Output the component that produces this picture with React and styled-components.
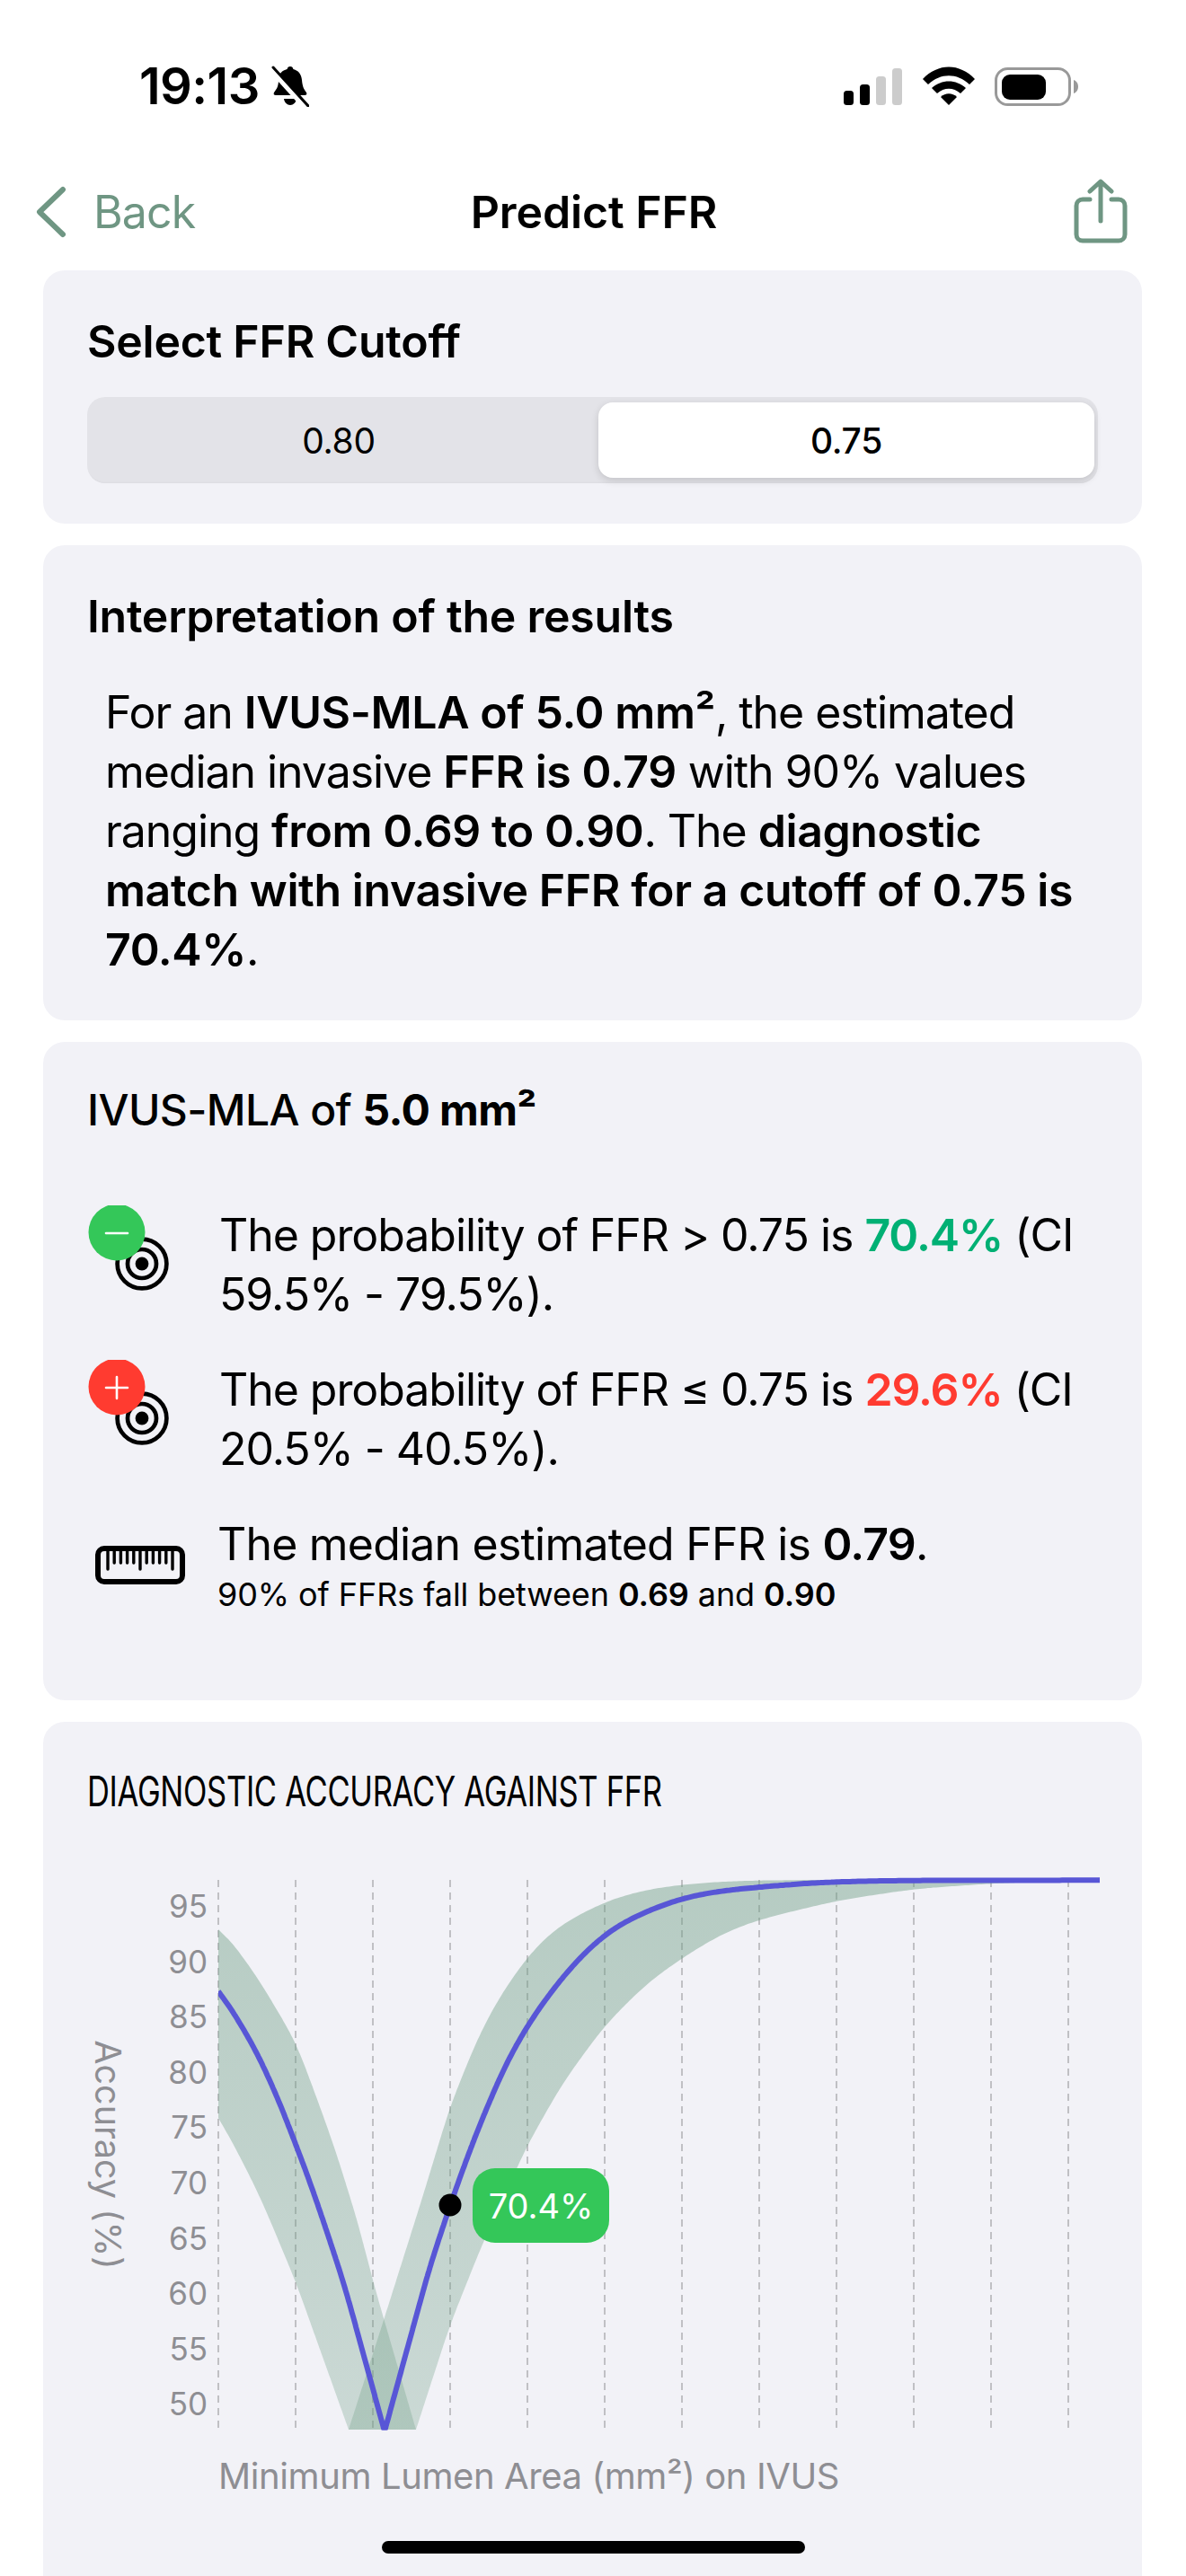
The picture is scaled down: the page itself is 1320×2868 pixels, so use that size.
import React from 'react';
import styled, { createGlobalStyle } from 'styled-components';

const Global = createGlobalStyle`
  html, body { margin: 0; padding: 0; background: #fff; }
  * { box-sizing: border-box; }
`;
const FONT = `Inter, "Noto Sans", "Liberation Sans", sans-serif`;
const ACCENT = '#6F9683';

const Page = styled.div`
  position: relative; width: 1320px; height: 2868px; overflow: hidden;
  background: #fff; font-family: ${FONT}; color: #000;
`;
const StatusBar = styled.div`
  height: 180px; display: flex; justify-content: space-between; align-items: flex-start;
  padding: 66px 120px 0 155px;
`;
const StatusLeft = styled.div`display: flex; align-items: center; gap: 13px; height: 60px;`;
const Time = styled.span`font-size: 56px; font-weight: 600; letter-spacing: -0.6px; line-height: 60px;`;
const StatusIcons = styled.svg`display: block; margin-top: 6px;`;
const Nav = styled.div`
  display: grid; grid-template-columns: 1fr auto 1fr; align-items: center; height: 121px;
  padding: 0 36px 10px 38px;
`;
const BackButton = styled.div`display: flex; align-items: center; gap: 30px; color: ${ACCENT};`;
const BackLabel = styled.span`font-size: 50px; letter-spacing: -0.9px; line-height: 60px;`;
const NavTitle = styled.div`font-size: 50px; font-weight: 600; letter-spacing: -0.1px; line-height: 60px;`;
const ShareBox = styled.div`justify-self: end; margin-right: 29px;`;
const Cards = styled.div`display: flex; flex-direction: column; gap: 24px; padding: 0 49px 0 48px;`;
const Card = styled.section`
  background: #F2F2F7; border-radius: 24px;
  padding: ${p => p.$pad || '54px 49px 45px'};
`;
const CardTitle = styled.h2`
  margin: 0; font-size: 50px; font-weight: 600; letter-spacing: -0.25px; line-height: 50px;
`;
const Segments = styled.div`
  position: relative; display: grid; grid-template-columns: 560px 1fr; column-gap: 9px; height: 96px; margin-top: 37px;
  background: #E3E3E8; border-radius: 20px; width: 1125px; padding: 6px 4px 6px 0;
  box-shadow: inset 0 -3px 2px -2px rgba(0,0,0,.03);
`;
const Segment = styled.div`
  display: flex; align-items: center; justify-content: center; font-size: 39px; letter-spacing: -0.3px;
  border-radius: 16px; background: ${p => p.$on ? '#fff' : 'transparent'};
  font-weight: ${p => p.$on ? 500 : 400};
  box-shadow: ${p => p.$on ? '0 3px 8px rgba(0,0,0,.14)' : 'none'};
`;
const Body = styled.p`
  margin: 49px 0 0 20px; font-size: 50px; line-height: 66px; letter-spacing: -1.05px; width: 1090px;
  b { font-weight: 600; letter-spacing: -0.4px; }
`;
const Sub = styled.h2`
  margin: 0; font-size: 48px; font-weight: 500; letter-spacing: -0.6px; line-height: 50px;
  b { font-weight: 700; }
`;
const Rows = styled.div`display: flex; flex-direction: column; gap: 40px; margin-top: 81px;`;
const Row = styled.div`display: grid; grid-template-columns: ${p => p.$col || 147}px 1fr;`;
const RowText = styled.div`
  font-size: 50px; line-height: 66px; letter-spacing: ${p => p.$ls || -1.05}px; b { font-weight: 600; }
`;
const Small = styled.div`
  font-size: 36px; line-height: 44px; margin-top: 1px; letter-spacing: -0.1px; b { font-weight: 600; }
`;
const Pct = styled.b`color: ${p => p.$c};`;
const ChartTitle = styled.h2`
  margin: 0; font-size: 46px; font-weight: 400; line-height: 50px; white-space: nowrap;
  transform: scaleX(.75); transform-origin: left center; letter-spacing: -0.4px;
`;
const Chart = styled.div`position: relative; width: 1223px; height: 780px; margin: 21px 0 0 -49px;`;
const ChartSvg = styled.svg`display: block;`;
const Badge = styled.div`
  position: absolute; left: 478px; top: 374px; width: 152px; height: 83px;
  background: #34C759; border-radius: 25px; color: #fff; font-size: 38px;
  display: flex; align-items: center; justify-content: center;
`;
const Home = styled.div`
  position: absolute; left: 425px; top: 2829px; width: 471px; height: 14px; border-radius: 7px; background: #000;
`;

// Resample a traced polyline evenly, then even out tracing noise with a symmetric window
// that narrows at the ends, so the end points stay where they were traced.
function fair(pts, step = 3, radius = 14) {
  const dense = [];
  for (let i = 0; i < pts.length - 1; i++) {
    const [x0, y0] = pts[i], [x1, y1] = pts[i + 1];
    const n = Math.max(1, Math.round(Math.hypot(x1 - x0, y1 - y0) / step));
    for (let k = 0; k < n; k++) dense.push([x0 + (x1 - x0) * k / n, y0 + (y1 - y0) * k / n]);
  }
  dense.push(pts[pts.length - 1]);
  return dense.map((_, i) => {
    const r = Math.min(radius, i, dense.length - 1 - i);
    let sx = 0, sy = 0, sw = 0;
    for (let j = -r; j <= r; j++) {
      const w = r + 1 - Math.abs(j);
      sx += dense[i + j][0] * w; sy += dense[i + j][1] * w; sw += w;
    }
    return [sx / sw, sy / sw];
  });
}
const line = pts => pts.map(p => `${p[0].toFixed(1)} ${p[1].toFixed(1)}`).join('L');
const band = (a, b) => `M${line(fair(a))}L${line(fair(b).reverse())}Z`;

const leftUp = [[243,2148],[263,2168],[290,2207],[329,2273],[353,2337],[373,2393],[397,2470],[418,2550],[463,2705]];
const leftLow = [[243,2358],[263,2393],[290,2447],[329,2540],[388,2705]];
const rightUp = [[388,2705],[428,2580],[470,2447],[501,2345],[530,2273],[553,2228],[587,2178],[620,2145],[673,2117],[713,2105],[759,2098],[820,2094],[900,2093],[1000,2093]];
const rightLow = [[463,2705],[501,2588],[537,2498],[587,2388],[627,2318],[673,2255],[720,2208],[759,2180],[803,2153],[845,2137],[932,2116],[1018,2103],[1104,2097],[1190,2094]];
const midLeft = [[243,2217],[263,2245],[287,2287],[310,2338],[329,2387],[347,2435],[370,2503],[385,2550],[428,2707]];
const midRight = [[428,2707],[478,2525],[501,2455],[520,2402],[537,2358],[563,2298],[587,2255],[610,2222],[637,2188],[673,2153],[707,2133],[759,2113],[803,2105],[845,2101],[907,2096],[976,2094],[1045,2093.5],[1224,2093.3]];

const gridX = Array.from({ length: 12 }, (_, i) => 243 + i * 86);
const yLabels = [95,90,85,80,75,70,65,60,55,50];

function Target({ cx, cy }) {
  return (
    <g fill="none" stroke="#000" strokeWidth="4.7">
      <circle cx={cx} cy={cy} r="27.4" />
      <circle cx={cx} cy={cy} r="16" />
      <circle cx={cx} cy={cy} r="7.4" fill="#000" stroke="none" />
    </g>
  );
}
function ProbIcon({ color, plus }) {
  return (
    <svg width="147" height="110" viewBox="0 0 147 110" style={{ display: 'block' }}>
      <Target cx={61} cy={65} />
      <circle cx={33} cy={30} r="31.5" fill={color} />
      <path d={plus ? 'M21 31H45M33 19V43' : 'M21 31H45'} stroke="#fff" strokeWidth="2.6" strokeLinecap="round" fill="none" />
    </svg>
  );
}
function RulerIcon() {
  const ticks = [];
  for (let i = 0; i < 11; i++) {
    const x = 23 + i * 7.2;
    const long = i === 0 || i === 5 || i === 10;
    ticks.push(<line key={i} x1={x} x2={x} y1="38" y2={long ? 61 : 54} />);
  }
  return (
    <svg width="120" height="90" viewBox="0 0 120 90" style={{ display: 'block' }}>
      <rect x="12" y="38" width="94" height="37" rx="7" fill="none" stroke="#000" strokeWidth="6" />
      <g stroke="#000" strokeWidth="3.4" strokeLinecap="round">{ticks}</g>
    </svg>
  );
}

export default function App() {
  return (
    <Page>
      <Global />
      <StatusBar>
        <StatusLeft>
          <Time>19:13</Time>
          <svg width="42" height="46" viewBox="0 0 42 46" style={{ display: 'block' }}>
            <path d="M21 1c2 0 3 1 3.400 3 6 1.500 9 6 9.600 12 .6 7 2 10 5 14 1 2 0 3-2 3H5c-2 0-3-1-2-3 3-4 5-7 5-14 0-7 4-10.500 9.600-12C18 2 19 1 21 1Z" fill="#000" />
            <path d="M14 37h14c-.5 4-3.500 7-7 7s-6.500-3-7-7Z" fill="#000" />
            <path d="M0 4L38 46" stroke="#fff" strokeWidth="7" />
            <path d="M2 2L41 45" stroke="#000" strokeWidth="3" strokeLinecap="round" />
          </svg>
        </StatusLeft>
        <StatusIcons width="262" height="50" viewBox="936 72 262 50">
          <rect x="937" y="101" width="11" height="16" rx="3.500" fill="#000" />
          <rect x="955" y="94" width="11" height="23" rx="3.500" fill="#000" />
          <rect x="973" y="85" width="11" height="32" rx="3.500" fill="#ccc" />
          <rect x="991" y="76" width="11" height="41" rx="3.500" fill="#ccc" />
          <path d="M1025 88C1042 70 1066 70 1083 88L1077 94C1063 81 1045 81 1031 94Z" fill="#000" />
          <path d="M1035 98C1046 88 1062 88 1073 98L1067 104C1059 97 1049 97 1041 104Z" fill="#000" />
          <path d="M1045 108C1050 103 1058 103 1063 108L1054 117Z" fill="#000" />
          <rect x="1106.500" y="76.500" width="82" height="40" rx="13" fill="none" stroke="#999" strokeWidth="3" />
          <rect x="1113" y="83" width="49" height="28" rx="9" fill="#000" />
          <path d="M1193 89c3 1 5 4 5 7.500s-2 6.500-5 7.500Z" fill="#999" />
        </StatusIcons>
      </StatusBar>
      <Nav>
        <BackButton>
          <svg width="36" height="58" viewBox="0 0 36 58" style={{ display: 'block' }}>
            <path d="M32 4L6 29L32 54" fill="none" stroke={ACCENT} strokeWidth="6" strokeLinecap="round" strokeLinejoin="round" />
          </svg>
          <BackLabel>Back</BackLabel>
        </BackButton>
        <NavTitle>Predict FFR</NavTitle>
        <ShareBox>
          <svg width="60" height="74" viewBox="0 0 60 74" style={{ display: 'block' }}>
            <g fill="none" stroke={ACCENT} strokeWidth="5" strokeLinecap="round" strokeLinejoin="round">
              <path d="M18 23H10C6 23 3 26 3 30V62C3 66 6 69 10 69H50C54 69 57 66 57 62V30C57 26 54 23 50 23H42" />
              <path d="M30 47V4M18 14L30 3L42 14" />
            </g>
          </svg>
        </ShareBox>
      </Nav>
      <Cards>
        <Card>
          <CardTitle>Select FFR Cutoff</CardTitle>
          <Segments>
            <Segment>0.80</Segment>
            <Segment $on>0.75</Segment>
          </Segments>
        </Card>
        <Card $pad="54px 49px 46px">
          <CardTitle>Interpretation of the results</CardTitle>
          <Body>
            For an <b>IVUS-MLA of 5.0 mm²</b>, the estimated median invasive <b>FFR is 0.79</b> with 90% values ranging <b>from 0.69 to 0.90</b>. The <b>diagnostic match with invasive FFR for a cutoff of 0.75 is 70.4%</b>.
          </Body>
        </Card>
        <Card $pad="51px 49px 96px">
          <Sub>IVUS-MLA of <b>5.0 mm²</b></Sub>
          <Rows>
            <Row>
              <ProbIcon color="#34C759" />
              <RowText>The probability of FFR &gt; 0.75 is <Pct $c="#00B074">70.4%</Pct> (CI 59.5% - 79.5%).</RowText>
            </Row>
            <Row>
              <ProbIcon color="#FF3B30" plus />
              <RowText>The probability of FFR ≤ 0.75 is <Pct $c="#FF3B30">29.6%</Pct> (CI 20.5% - 40.5%).</RowText>
            </Row>
            <Row $col={145}>
              <RulerIcon />
              <div>
                <RowText $ls={-0.8}>The median estimated FFR is <b>0.79</b>.</RowText>
                <Small>90% of FFRs fall between <b>0.69</b> and <b>0.90</b></Small>
              </div>
            </Row>
          </Rows>
        </Card>
        <Card $pad="52px 49px 120px">
          <ChartTitle>DIAGNOSTIC ACCURACY AGAINST FFR</ChartTitle>
          <Chart>
            <ChartSvg width="1223" height="780" viewBox="48 2040 1223 780">
              <defs>
                <linearGradient id="band" gradientUnits="userSpaceOnUse" x1="0" x2="0" y1="2093" y2="2705">
                  <stop offset="0" stopColor="#6F9E85" stopOpacity=".46" />
                  <stop offset="1" stopColor="#6F9E85" stopOpacity=".3" />
                </linearGradient>
                <clipPath id="plot"><rect x="243" y="2090" width="981" height="615.500" /></clipPath>
              </defs>
              <g stroke="#C0C0C4" strokeWidth="2" strokeDasharray="8 6">
                {gridX.map(x => <line key={x} x1={x} x2={x} y1="2093" y2="2706" />)}
              </g>
              <path d={band(leftUp, leftLow)} fill="url(#band)" />
              <path d={band(rightUp, rightLow)} fill="url(#band)" />
              <g clipPath="url(#plot)" fill="none" stroke="#5856D6" strokeWidth="6" strokeLinejoin="round">
                <path d={`M${line(fair(midLeft))}`} />
                <path d={`M${line(fair(midRight))}`} />
              </g>
              <circle cx="501" cy="2455" r="12.500" fill="#000" />
              <g fontFamily={FONT} fontSize="35" fill="#8E8E93">
                {yLabels.map((v, i) => (
                  <text key={v} x="231" y={2135 + i * 61.6} textAnchor="end">{v}</text>
                ))}
                <text x="243" y="2771" fontSize="40" letterSpacing="-0.4">Minimum Lumen Area (mm²) on IVUS</text>
                <text transform="translate(106 2399) rotate(90)" textAnchor="middle" fontSize="39.500">Accuracy (%)</text>
              </g>
            </ChartSvg>
            <Badge>70.4%</Badge>
          </Chart>
        </Card>
      </Cards>
      <Home />
    </Page>
  );
}
